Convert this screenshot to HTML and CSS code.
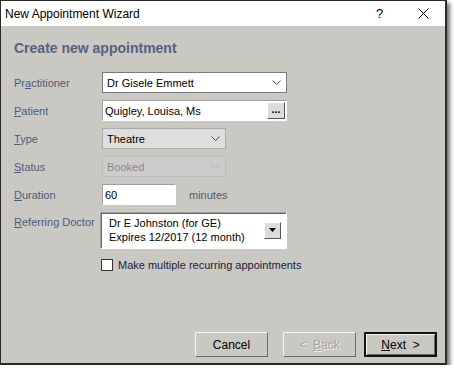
FILE: index.html
```html
<!DOCTYPE html>
<html>
<head>
  <title>New Appointment Wizard</title>
  <meta charset="utf-8">
  <link rel="stylesheet" href="styles.css">
</head>
<body>
  <div class="window">
    <div class="titlebar">
      <span class="title">New Appointment Wizard</span>
      <span class="help">?</span>
      <span class="close">
        <svg width="11" height="11" viewBox="0 0 11 11"><path d="M0.5 0.5L10.5 10.5M10.5 0.5L0.5 10.5" stroke="#000" stroke-width="1" fill="none"/></svg>
      </span>
    </div>

    <div class="content">
      <h1>Create new appointment</h1>

      <div class="form">
        <label>Pr<u>a</u>ctitioner</label>
        <div class="combo wide">
          <span>Dr Gisele Emmett</span>
          <svg class="chev" width="9" height="5" viewBox="0 0 9 5"><path d="M0.5 0.5L4.5 4.5L8.5 0.5" stroke="#555" fill="none"/></svg>
        </div>

        <label><u>P</u>atient</label>
        <div class="field wide">
          <span>Quigley, Louisa, Ms</span>
          <span class="dots">...</span>
        </div>

        <label><u>T</u>ype</label>
        <div class="combo flat">
          <span>Theatre</span>
          <svg class="chev" width="9" height="5" viewBox="0 0 9 5"><path d="M0.5 0.5L4.5 4.5L8.5 0.5" stroke="#555" fill="none"/></svg>
        </div>

        <label><u>S</u>tatus</label>
        <div class="combo flat disabled">
          <span>Booked</span>
          <svg class="chev" width="9" height="5" viewBox="0 0 9 5"><path d="M0.5 0.5L4.5 4.5L8.5 0.5" stroke="#b5b5b5" fill="none"/></svg>
        </div>

        <label><u>D</u>uration</label>
        <div class="duration">
          <div class="field short"><span>60</span></div>
          <span class="unit">minutes</span>
        </div>

        <label class="top"><u>R</u>eferring Doctor</label>
        <div class="referrer">
          <div class="lines">
            <span>Dr E Johnston (for GE)</span>
            <span>Expires 12/2017 (12 month)</span>
          </div>
          <span class="drop">
            <svg width="7" height="5" viewBox="0 0 7 5"><path d="M0 0H7L3.5 4Z" fill="#000"/></svg>
          </span>
        </div>
      </div>

      <div class="check">
        <span class="box"></span>
        <span>Make multiple recurring appointments</span>
      </div>

      <div class="buttons">
        <span class="btn">Cancel</span>
        <span class="btn off">&lt;&nbsp;&nbsp;<u>B</u>ack</span>
        <span class="btn default"><u>N</u>ext&nbsp;&nbsp;&gt;</span>
      </div>
    </div>
  </div>
</body>
</html>
```

FILE: styles.css
```css
*{
  padding:0;
  margin:0;
  box-sizing:border-box;
}
body{
  background:#fff;
  font-family:"Liberation Sans", Arial, sans-serif;
  font-size:11px;
}
.window{
  width:447px;
  height:365px;
  border:1px solid #2a2a2a;
  border-right-width:2px;
  border-bottom-width:2px;
  background:#c9c8c3;
  box-shadow:3px 3px 4px rgba(0,0,0,0.55);
  display:flex;
  flex-direction:column;
}
.titlebar{
  height:25px;
  background:#fff;
  display:flex;
  align-items:center;
  font-size:12px;
  color:#000;
}
.title{
  flex:1;
  padding-left:4px;
}
.help{
  width:20px;
  font-size:13px;
  margin-right:22px;
}
.close{
  width:27px;
  display:flex;
  align-items:center;
}
.content{
  flex:1;
  display:flex;
  flex-direction:column;
  padding:14px 8px 6px 13px;
}
h1{
  font-size:14px;
  line-height:17px;
  font-weight:bold;
  color:#58607e;
  margin-bottom:15px;
}
.form{
  display:grid;
  grid-template-columns:88px auto;
  row-gap:7px;
  align-items:center;
}
.form label{
  color:#515b7a;
}
.form label.top{
  align-self:start;
  padding-top:4px;
}
.combo, .field{
  height:21px;
  display:flex;
  align-items:center;
  justify-content:space-between;
  background:#fff;
  color:#000;
}
.combo{
  border:1px solid #7a7a7a;
  padding:0 5px 0 4px;
}
.wide{
  width:185px;
}
.combo.flat{
  width:124px;
  background:#dedede;
  border-color:#acacac;
}
.combo.disabled{
  background:#cdcccb;
  border-color:#bdbdbd;
  color:#8a8a8a;
}
.field{
  border-top:1px solid #a0a0a0;
  border-left:1px solid #a0a0a0;
  border-right:1px solid #fff;
  border-bottom:1px solid #fff;
  padding:0 1px 0 2px;
}
.dots{
  width:18px;
  height:17px;
  background:#dcdcdc;
  border:1px solid;
  border-color:#fff #555 #555 #fff;
  font-weight:bold;
  text-align:center;
  line-height:12px;
  font-size:11px;
}
.duration{
  display:flex;
  align-items:center;
  gap:13px;
}
.field.short{
  width:74px;
}
.unit{
  color:#515b7a;
}
.referrer{
  width:187px;
  height:37px;
  margin-left:-2px;
  background:#fff;
  border:1px solid;
  border-color:#a0a0a0 #fff #fff #a0a0a0;
  box-shadow:inset 1px 1px 0 #696969;
  display:flex;
  justify-content:space-between;
  padding:3px 5px 0 8px;
  color:#000;
}
.lines{
  display:flex;
  flex-direction:column;
  line-height:14px;
}
.drop{
  margin-top:6px;
  width:17px;
  height:17px;
  background:#dcdcdc;
  border:1px solid;
  border-color:#fff #555 #555 #fff;
  display:flex;
  align-items:center;
  justify-content:center;
}
.check{
  display:flex;
  align-items:center;
  gap:5px;
  margin:10px 0 0 87px;
  color:#1c1c3c;
}
.box{
  width:12px;
  height:12px;
  background:#fff;
  border:1px solid #333;
}
.buttons{
  margin-top:auto;
  display:flex;
  justify-content:flex-end;
  gap:15px;
}
.btn{
  width:73px;
  height:25px;
  display:flex;
  align-items:center;
  justify-content:center;
  border:1px solid;
  border-color:#f4f4f4 #6a6a6a #6a6a6a #f4f4f4;
  color:#000;
  font-size:12px;
}
.btn.off{
  color:#a3a3a3;
  text-shadow:1px 1px 0 #f2f2f2;
}
.btn.default{
  margin-left:-7px;
  border:2px solid #111;
  box-shadow:inset 1px 1px 0 #f4f4f4, inset -1px -1px 0 #6a6a6a;
}
```
